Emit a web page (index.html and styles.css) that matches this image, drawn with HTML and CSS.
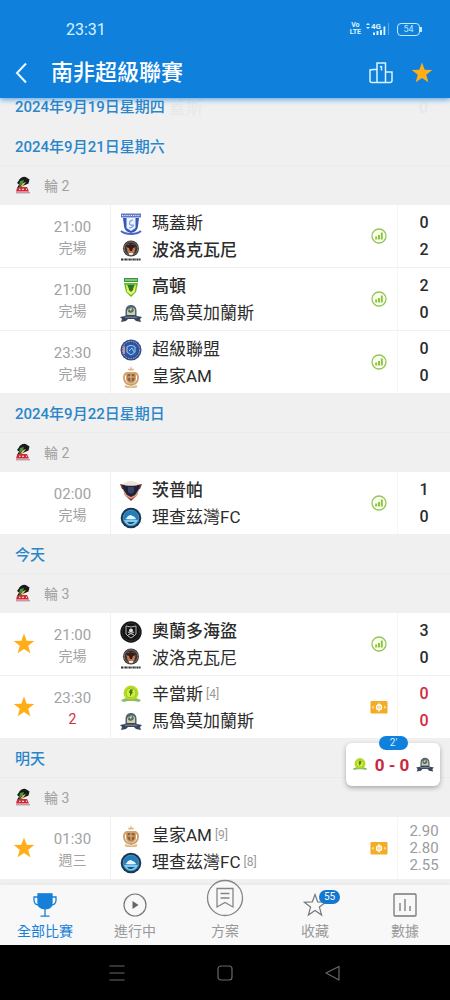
FILE: index.html
```html
<!DOCTYPE html>
<html lang="zh-Hant">
<head>
<meta charset="utf-8">
<meta name="viewport" content="width=device-width, initial-scale=1">
<title>南非超級聯賽</title>
<link rel="stylesheet" href="styles.css">
</head>
<body>
<svg class="sprite" aria-hidden="true">
  <symbol id="star" viewBox="0 0 24 24"><path fill="#ffae17" d="M12 .5l2.900 8 8.300.3-6.600 5.100 2.300 8.200-6.900-4.700-6.900 4.700 2.300-8.200-6.600-5.100 8.300-.3z"/></symbol>
  <symbol id="stats" viewBox="0 0 16 16"><circle cx="8" cy="8" r="7" fill="#faffef" stroke="#98c45c" stroke-width="1.300"/><path stroke="#8cc63c" stroke-width="2" d="M5.200 8.600v3M8 7v4.600M10.800 4.600v7"/></symbol>
  <symbol id="live" viewBox="0 0 18 14"><rect x=".5" y="1" width="17" height="12.400" rx="1" fill="#f4ac24"/><circle cx="9" cy="7.200" r="2.600" fill="#f9cd74" stroke="#fff" stroke-width="1.200"/><path stroke="#fff" d="M9 2.500v9.400" stroke-width=".8"/><path fill="#fff" d="M2 7.200l1.500-1.700v3.400zM16 7.200l-1.500-1.700v3.400z"/></symbol>
  <symbol id="league" viewBox="0 0 16 18"><path fill="#181c18" d="M3.500 5c2-4 6-5 8-3.500l3 2-1 4-3.500 1.500L5 11.500 2 12l2-3.500L2 7z"/><path fill="#47914b" d="M5 5l4-1-1 3-4 4z"/><path fill="#ddc44c" d="M8 7l3-1-3 4-3 1z"/><path fill="#ce2938" d="M2 12l3-1h7l2 4.500H1z"/><path fill="#fff" d="M4 12.800h1.500v1H4zm3 0h2v1H7zm4 0h1v1h-1z"/><path stroke="#8c4b50" stroke-width=".7" d="M1 16.800h14"/></symbol>
  <symbol id="magesi" viewBox="0 0 22 22"><path fill="#6277c8" d="M1 .5h20v4H1z"/><path stroke="#e9eefb" stroke-width="1.100" stroke-dasharray="1.200 1" d="M2 2.500h18"/><path fill="#3458b8" d="M3 5h16l-1 8c-.5 4-3 6-7 7-4-1-6.500-3-7-7z"/><path fill="#eef4ff" d="M6.500 5h9v10l-4.500 3-4.500-3z"/><path fill="none" stroke="#7b9ada" stroke-width="1.200" d="M13 7c-5 1-4 6-1 5s1 3-3 3"/><path fill="none" stroke="#4868c5" stroke-width="2" d="M1 18c5 4 15 4 20 0"/></symbol>
  <symbol id="polokwane" viewBox="0 0 22 22"><circle cx="11" cy="8.500" r="8" fill="#343333"/><circle cx="11" cy="8.500" r="6.700" fill="none" stroke="#8b817a" stroke-width=".8"/><path fill="#c8764e" d="M6.500 7l2-3h5l2 3-1 5-2 2h-3l-2-2z"/><path fill="#351d18" d="M6 7c2-4 8-4 10 0l-3 1-1 3h-2L9 8z"/><path fill="#f0ede5" d="M8.500 13h5l-1 2h-3z"/><path stroke="#333" stroke-width="1.800" stroke-dasharray="2 .5 1 .4" d="M1 19.500h20"/></symbol>
  <symbol id="arrows" viewBox="0 0 22 22"><path fill="#359448" d="M4 2h14v4H4z"/><path stroke="#e0ee9b" d="M5 4h12"/><path fill="#61b832" d="M4 7h14l-2 9-5 5-5-5z"/><path fill="#eff35a" d="M6 8l5 7 5-7-1 8-4 3-4-3z"/><path fill="#29752c" d="M8 9h6l-1 5-2 2-2-2z"/></symbol>
  <symbol id="marumo" viewBox="0 0 22 22"><path fill="#516376" d="M5.500 14V8c0-4 2.500-6 5.500-6s5.500 2 5.500 6v6z"/><path fill="#cfceaa" d="M7 8c1-4 7-5 8-1v5H7z"/><path fill="#536f65" d="M9 4l4 1 1 3-3 2-3-1z"/><path fill="#e9e4bd" d="M9 6l3-1-1 3z"/><path fill="#39465f" d="M0 14l5-1 2-1h8l2 1 5 1-2 2 1 3-5-1-2-2H8l-2 2-5 1 1-3z"/><path stroke="#9ba7b9" stroke-width=".8" d="M5 14.200h12"/></symbol>
  <symbol id="supersport" viewBox="0 0 22 22"><circle cx="11" cy="11" r="10.500" fill="#334f90"/><circle cx="11" cy="11" r="8.600" fill="none" stroke="#a2b5d5" stroke-width="1" stroke-dasharray="1.500 1"/><rect x="5.500" y="5.500" width="11" height="11" rx="3" fill="#2861ba"/><path fill="none" stroke="#a9cae8" stroke-width="1" d="M7 8c3-2 5-2 8 0v5l-4 3-4-3zM9 12l3-3 2 4"/><path fill="#d8907b" d="M3 8l2-1v8H3z"/></symbol>
  <symbol id="royal" viewBox="0 0 22 22"><path fill="#dfb68a" d="M8.500 4.500L8 2.500l2 .5 1-3 1 3 2-.5-.5 2z"/><path fill="none" stroke="#cf9f68" stroke-width="1.800" d="M6 7c-4 4-2 11 5 12 7-1 9-8 5-12"/><path fill="#d4a46b" d="M6 6h10v7c0 3-2 4-5 5-3-1-5-2-5-5z"/><path fill="#8d6043" d="M7.500 8h7v6L11 17l-3.500-3z"/><path stroke="#e7c083" d="M11 8v9M8 11h6"/><path fill="none" stroke="#dfbd89" stroke-width="2" d="M5 20c4 2 8 2 12 0"/></symbol>
  <symbol id="chippa" viewBox="0 0 22 22"><path fill="#eee3db" d="M3 4c5-4 11-4 16 0l-3 3H6z"/><path fill="#812f35" d="M0 4l5 1v5l-3-1zM22 4l-5 1v5l3-1z"/><path fill="#1e2138" d="M2 5c4 1 14 1 18 0l-3 10-6 4-6-4z"/><path fill="#d8a27c" d="M3 9l4 6 4 2 4-2 4-6-2 7-6 4-6-4z"/><path fill="#9b2938" d="M6 16l5 3 5-3-5 5z"/><path fill="#3a4268" d="M8 7h6v5l-3 2-3-2z"/></symbol>
  <symbol id="richards" viewBox="0 0 22 22"><circle cx="11" cy="11" r="10.300" fill="#173958"/><circle cx="11" cy="11" r="7.800" fill="#247cb8" stroke="#4e8fb8"/><path fill="#83c9e9" d="M4 13c5-1 10-1 14 0-2 7-12 7-14 0z"/><path fill="#e4f4fb" d="M5 12c2 0 2-4 6-4 1 1 4 1 5 4z"/><path fill="#15588d" d="M7 15h8l-3 2H9z"/></symbol>
  <symbol id="pirates" viewBox="0 0 22 22"><circle cx="11" cy="11" r="10.700" fill="#151515"/><circle cx="11" cy="11" r="8.800" fill="none" stroke="#4f4f4f" stroke-width=".8" stroke-dasharray="1 1"/><path fill="none" stroke="#b5b5b5" stroke-width="1" d="M6 5l5 1 5-1v8l-2 2-3 2-3-2-2-2z"/><circle cx="11" cy="9.500" r="2" fill="#ddd"/><path stroke="#ccc" d="M8 14l6-3M8 11l6 3"/></symbol>
  <symbol id="sundowns" viewBox="0 0 22 22"><circle cx="11" cy="9" r="7.500" fill="#b6dd24"/><circle cx="11" cy="9" r="5" fill="#d5ec3d" stroke="#9cca22"/><path fill="#3f7725" d="M10 5.500h3l-1 2.500h1l-3 4.500V9H9z"/><path fill="#8ebd60" d="M1 16l5-2c3 2 7 2 10 0l5 2-2 2-5-1H8l-5 1z"/></symbol>
</svg>

<div class="app">
  <header class="header">
    <div class="status">
      <span class="clock">23:31</span>
      <span class="signals">
        <span class="volte"><span>Vo</span><span>LTE</span></span>
        <svg width="24" height="14" viewBox="0 0 24 14" fill="#def6ff" role="img" aria-label="4G"><path d="M0 3l2-2 2 2zM0 5l2 2 2-2z"/><text x="5" y="7" class="tiny">4G</text><path d="M7 10.500h2V13H7zM10.500 9h2v4h-2zM14 8h2v5h-2zM17.500 4.500h1.800V13h-1.800z"/><path opacity=".35" d="M22 1h1v12h-1z"/></svg>
        <span class="battery">54</span>
      </span>
    </div>
    <div class="titlebar">
      <button class="icon-btn" aria-label="返回"><svg width="24" height="24" viewBox="0 0 24 24" fill="none" stroke="#e8f8ff" stroke-width="2"><path d="M16 2.500L7 12l9 9.500"/></svg></button>
      <h1>南非超級聯賽</h1>
      <button class="icon-btn" aria-label="排名"><svg width="24" height="24" viewBox="0 0 24 24" fill="none" stroke="#d8f4ff" stroke-width="1.500"><path d="M8 21.500V2h8.500v19.500M8 8.500H4.500L1 9v10.500q0 2 2 2h18q2 0 2-2V11h-6M12.500 5v4.500M11 6l1.500-1"/></svg></button>
      <button class="icon-btn" aria-label="收藏聯賽"><svg width="22" height="22"><use href="#star"/></svg></button>
    </div>
  </header>

  <main class="list">
    <div class="peek"><h2>2024年9月19日星期四</h2><span class="ghost-name">蓋斯</span><span class="ghost-score">0</span></div>

    <section>
      <h2 class="date">2024年9月21日星期六</h2>
      <h3 class="round"><svg width="16" height="18"><use href="#league"/></svg>輪 2</h3>
      <div class="matches">
        <article class="match">
          <div class="fav"></div><div class="when"><time>21:00</time><span>完場</span></div>
          <div class="teams"><div class="team"><svg><use href="#magesi"/></svg>瑪蓋斯</div><div class="team win"><svg><use href="#polokwane"/></svg>波洛克瓦尼</div></div>
          <svg class="mark" width="16" height="16"><use href="#stats"/></svg><div class="score"><span>0</span><span>2</span></div>
        </article>
        <article class="match">
          <div class="fav"></div><div class="when"><time>21:00</time><span>完場</span></div>
          <div class="teams"><div class="team win"><svg><use href="#arrows"/></svg>高頓</div><div class="team"><svg><use href="#marumo"/></svg>馬魯莫加蘭斯</div></div>
          <svg class="mark" width="16" height="16"><use href="#stats"/></svg><div class="score"><span>2</span><span>0</span></div>
        </article>
        <article class="match">
          <div class="fav"></div><div class="when"><time>23:30</time><span>完場</span></div>
          <div class="teams"><div class="team"><svg><use href="#supersport"/></svg>超級聯盟</div><div class="team"><svg><use href="#royal"/></svg>皇家AM</div></div>
          <svg class="mark" width="16" height="16"><use href="#stats"/></svg><div class="score"><span>0</span><span>0</span></div>
        </article>
      </div>
    </section>

    <section>
      <h2 class="date">2024年9月22日星期日</h2>
      <h3 class="round"><svg width="16" height="18"><use href="#league"/></svg>輪 2</h3>
      <div class="matches">
        <article class="match">
          <div class="fav"></div><div class="when"><time>02:00</time><span>完場</span></div>
          <div class="teams"><div class="team win"><svg><use href="#chippa"/></svg>茨普帕</div><div class="team"><svg><use href="#richards"/></svg>理查茲灣FC</div></div>
          <svg class="mark" width="16" height="16"><use href="#stats"/></svg><div class="score"><span>1</span><span>0</span></div>
        </article>
      </div>
    </section>

    <section>
      <h2 class="date">今天</h2>
      <h3 class="round"><svg width="16" height="18"><use href="#league"/></svg>輪 3</h3>
      <div class="matches">
        <article class="match">
          <button class="fav" aria-label="取消收藏"><svg width="22" height="22"><use href="#star"/></svg></button><div class="when"><time>21:00</time><span>完場</span></div>
          <div class="teams"><div class="team win"><svg><use href="#pirates"/></svg>奧蘭多海盜</div><div class="team"><svg><use href="#polokwane"/></svg>波洛克瓦尼</div></div>
          <svg class="mark" width="16" height="16"><use href="#stats"/></svg><div class="score"><span>3</span><span>0</span></div>
        </article>
        <article class="match playing">
          <button class="fav" aria-label="取消收藏"><svg width="22" height="22"><use href="#star"/></svg></button><div class="when"><time>23:30</time><span>2</span></div>
          <div class="teams"><div class="team"><svg><use href="#sundowns"/></svg>辛當斯<small>[4]</small></div><div class="team"><svg><use href="#marumo"/></svg>馬魯莫加蘭斯</div></div>
          <svg class="mark" width="18" height="14"><use href="#live"/></svg><div class="score"><span>0</span><span>0</span></div>
        </article>
      </div>
    </section>

    <section>
      <h2 class="date">明天</h2>
      <h3 class="round"><svg width="16" height="18"><use href="#league"/></svg>輪 3</h3>
      <div class="matches">
        <article class="match">
          <button class="fav" aria-label="取消收藏"><svg width="22" height="22"><use href="#star"/></svg></button><div class="when"><time>01:30</time><span>週三</span></div>
          <div class="teams"><div class="team"><svg><use href="#royal"/></svg>皇家AM<small>[9]</small></div><div class="team"><svg><use href="#richards"/></svg>理查茲灣FC<small>[8]</small></div></div>
          <svg class="mark" width="18" height="14"><use href="#live"/></svg><div class="score odds"><span>2.90</span><span>2.80</span><span>2.55</span></div>
        </article>
      </div>
    </section>
  </main>

  <aside class="live-card">
    <span class="minute">2'</span>
    <svg width="16" height="16"><use href="#sundowns"/></svg><strong>0 - 0</strong><svg width="18" height="18"><use href="#marumo"/></svg>
  </aside>

  <nav class="tabs">
    <a class="tab active" href="#all"><span class="glyph"><svg width="24" height="24" viewBox="0 0 24 24" fill="none" stroke="#1680d8" stroke-width="1.300"><path fill="#1680d8" d="M5 .8h14v9c0 4-3 6-7 6s-7-2-7-6z"/><path d="M5 4H1v3c0 3 2 5 5 5M19 4h4v3c0 3-2 5-5 5M12 15v8M7.500 23.200h9"/></svg></span>全部比賽</a>
    <a class="tab" href="#live"><span class="glyph"><svg width="24" height="24" viewBox="0 0 24 24" fill="none" stroke="#777" stroke-width="1.200"><circle cx="12" cy="12" r="11"/><path fill="#666" stroke="none" d="M9.500 8l6 4-6 4z"/></svg></span>進行中</a>
    <a class="tab" href="#tips"><span class="glyph"><svg width="38" height="38" viewBox="0 0 38 38" fill="none" stroke="#858585" stroke-width="1.300"><circle cx="19" cy="19" r="17.500" fill="#f8f8f8"/><path d="M11 9.500h16v18.500l-8-4.500-8 4.500zM14.500 14.500h9M14.500 19h9"/></svg></span>方案</a>
    <a class="tab" href="#saved"><span class="glyph"><svg width="24" height="24" viewBox="0 0 24 24" fill="none" stroke="#777" stroke-width="1.200"><path d="M12 1.500l2.700 7.400 8 .3-6.300 4.900 2.200 7.900L12 17.500 5.400 22l2.200-7.900-6.300-4.900 8-.3z"/></svg><span class="count">55</span></span>收藏</a>
    <a class="tab" href="#data"><span class="glyph"><svg width="24" height="24" viewBox="0 0 24 24" fill="none" stroke="#777" stroke-width="1.300"><rect x="1" y="1" width="22" height="22" rx="1"/><path d="M7 10v8M12 6v12M17 13v5"/></svg></span>數據</a>
  </nav>

  <footer class="system">
    <button aria-label="最近"><svg width="18" height="18" viewBox="0 0 18 18" fill="none" stroke="#686868" stroke-width="1.200"><path d="M1.500 2h15M1.500 9h15M1.500 16h15"/></svg></button>
    <button aria-label="主頁"><svg width="18" height="18" viewBox="0 0 18 18" fill="none" stroke="#686868" stroke-width="1.200"><rect x="2" y="2" width="14" height="14" rx="3"/></svg></button>
    <button aria-label="返回"><svg width="18" height="18" viewBox="0 0 18 18" fill="none" stroke="#686868" stroke-width="1.200" stroke-linejoin="round"><path d="M15 2.500v13.500L2 9z"/></svg></button>
  </footer>
</div>
</body>
</html>
```
FILE: styles.css
```css
* { box-sizing: border-box; }
body {
  margin: 0;
  background: #f0f0f0;
  color: #2c2c2c;
  font-family: Roboto, "Noto Sans CJK TC", sans-serif;
}
button { padding: 0; border: 0; background: none; font: inherit; }
svg { display: block; flex: none; }
h1, h2, h3 { margin: 0; }
.sprite { position: absolute; width: 0; height: 0; }

.app { position: relative; display: flex; flex-direction: column; min-height: 100vh; }

.header {
  position: relative;
  z-index: 1;
  background: #1080dd;
  color: #fff;
  box-shadow: 0 2px 5px rgba(16, 128, 221, 0.6);
}
.status {
  display: flex;
  align-items: center;
  justify-content: space-between;
  height: 48px;
  padding: 10px 30px 0 66px;
}
.clock { color: #d6f2ff; font-size: 16px; }
.signals { display: flex; align-items: center; gap: 5px; }
.volte {
  display: grid;
  color: #def6ff;
  font-size: 7px;
  font-weight: 700;
  line-height: 7px;
  text-align: center;
}
.tiny { font-size: 8px; font-weight: 700; }
.battery {
  position: relative;
  width: 23px;
  margin-left: 2px;
  border: 1px solid #c2e8ff;
  border-radius: 4px;
  color: #c2e8ff;
  font-size: 9px;
  line-height: 11px;
  text-align: center;
}
.battery::after {
  content: "";
  position: absolute;
  top: 3px;
  right: -3px;
  width: 2px;
  height: 5px;
  background: #c2e8ff;
}
.titlebar { display: flex; align-items: center; height: 50px; padding: 0 16px 0 10px; gap: 17px; }
.titlebar h1 { flex: 1; font-size: 22px; font-weight: 500; line-height: 30px; }
.icon-btn { display: grid; place-items: center; min-width: 24px; height: 24px; }

.list { flex: 1; }
.peek { display: flex; align-items: flex-start; height: 28px; padding: 0 22px 0 15px; }
.peek h2, .date { color: #2a86ca; font-size: 15px; font-weight: 500; line-height: 18px; }
.ghost-name, .ghost-score { color: #e8e8e8; line-height: 20px; }
.ghost-name { margin-left: 4px; font-size: 17px; }
.ghost-score { margin-left: auto; font-size: 16px; font-weight: 500; }
.date {
  display: flex;
  align-items: center;
  height: 40px;
  padding: 2px 0 0 15px;
  border-bottom: 1px solid #ebebeb;
}
.round {
  display: flex;
  align-items: center;
  gap: 13px;
  height: 39px;
  padding: 0 0 2px 15px;
  color: #a2a2a2;
  font-size: 14px;
  font-weight: 400;
}
.matches { display: grid; gap: 1px; background: #f0f0f0; }
.match {
  display: grid;
  grid-template-columns: 48px 62px 1fr 36px 53px;
  align-items: center;
  height: 62px;
  background: #fff;
}
.fav { display: grid; place-items: center; }
.when {
  display: grid;
  align-content: center;
  height: 100%;
  padding: 4px 13px 0 0;
  color: #a2a2a2;
  font-size: 15px;
  line-height: 21px;
  text-align: center;
}
.when span { font-size: 14px; }
.teams {
  display: grid;
  align-content: center;
  height: 100%;
  padding: 2px 0 0 9px;
  border-left: 1px solid #f0f0f0;
}
.team {
  display: flex;
  align-items: center;
  gap: 10px;
  height: 27px;
  font-size: 17px;
  line-height: 27px;
  white-space: nowrap;
}
.team svg { width: 22px; height: 22px; }
.team small { margin-left: -7px; color: #999; font-size: 12px; }
.win { font-weight: 500; }
.mark { justify-self: center; }
.score {
  display: grid;
  align-content: center;
  height: 100%;
  border-left: 1px solid #f5f5f5;
  font-size: 16px;
  font-weight: 500;
  line-height: 27px;
  text-align: center;
}
.playing .score, .playing .when span { color: #d02a40; }
.odds { color: #9c9c9c; font-size: 15px; font-weight: 400; line-height: 17px; }

.live-card {
  position: absolute;
  right: 10px;
  bottom: 214px;
  display: flex;
  align-items: center;
  justify-content: space-between;
  width: 94px;
  height: 43px;
  padding: 0 6px;
  border-radius: 6px;
  background: #fff;
  box-shadow: 0 2px 5px rgba(0, 0, 0, 0.3);
}
.live-card strong { color: #c8283c; font-size: 17px; font-weight: 700; }
.minute {
  position: absolute;
  top: -7px;
  left: 33px;
  width: 29px;
  border-radius: 7px;
  background: #1080dd;
  color: #d6f2ff;
  font-size: 10px;
  line-height: 14px;
  text-align: center;
}

.tabs {
  display: grid;
  grid-template-columns: repeat(5, 1fr);
  grid-template-rows: 60px;
  background: #f8f8f8;
  box-shadow: 0 -1px 3px rgba(0, 0, 0, 0.03);
}
.tab {
  display: flex;
  flex-direction: column;
  align-items: center;
  justify-content: flex-end;
  gap: 4px;
  padding-bottom: 4px;
  color: #999;
  font-size: 14px;
  line-height: 20px;
  text-decoration: none;
}
.active { color: #1680d8; }
.glyph { position: relative; }
.count {
  position: absolute;
  top: -3px;
  left: 16px;
  width: 21px;
  border-radius: 7px;
  background: #1478d0;
  color: #fff;
  font-size: 10px;
  line-height: 14px;
  text-align: center;
}

.system {
  display: flex;
  align-items: center;
  justify-content: center;
  gap: 90px;
  height: 55px;
  background: #000;
}
```
